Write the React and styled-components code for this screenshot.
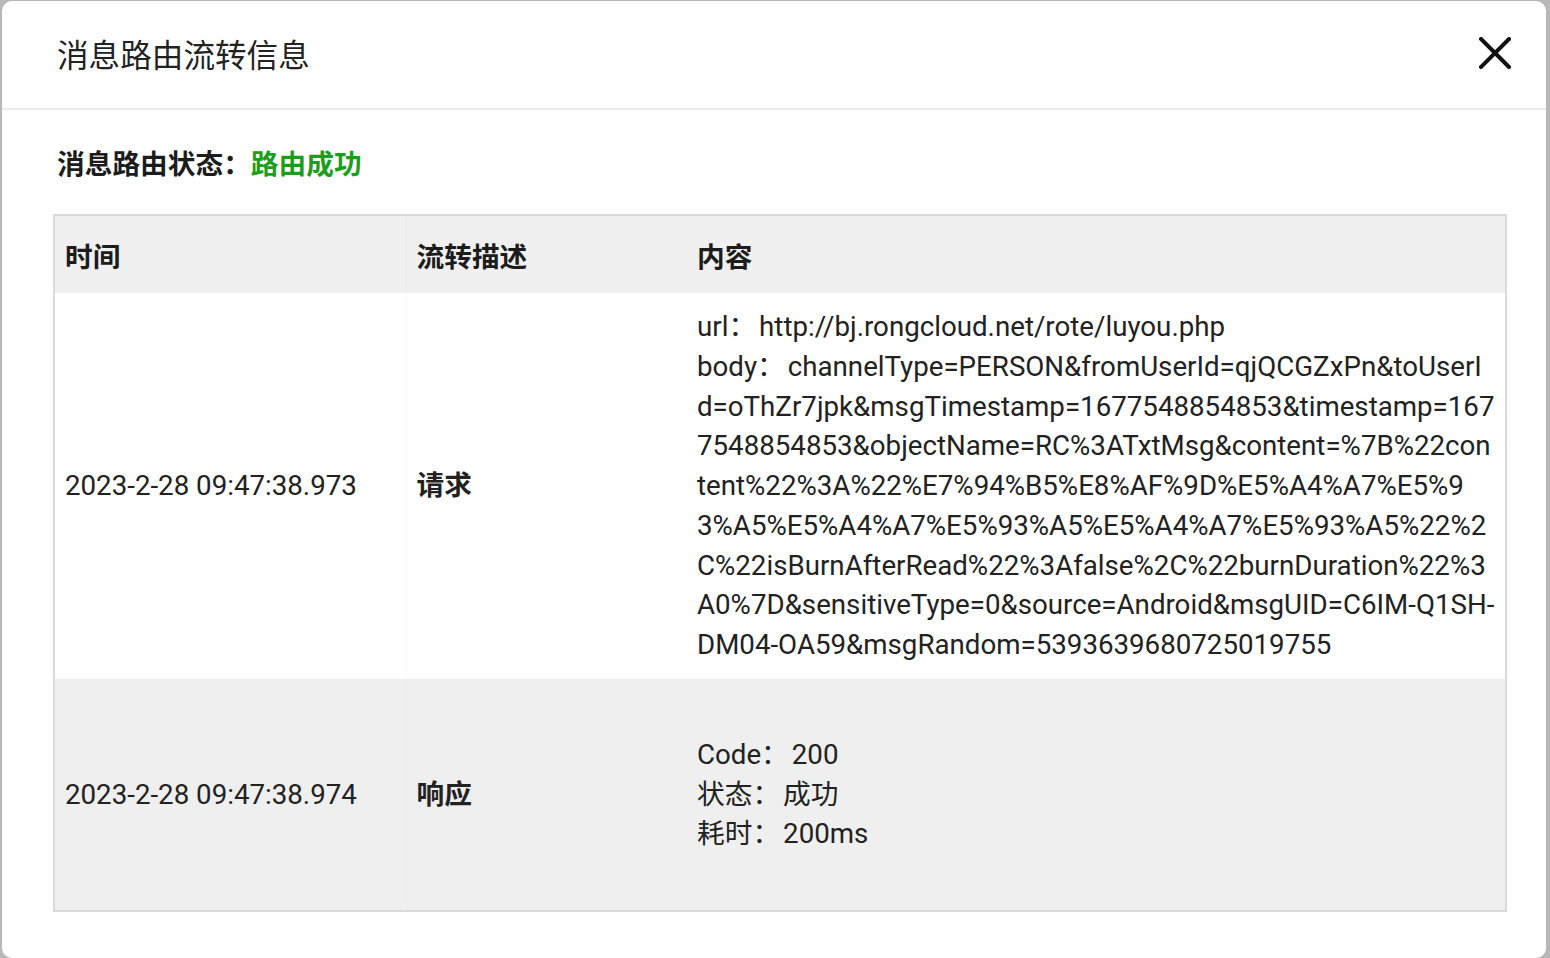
import React from 'react'
import styled, { createGlobalStyle } from 'styled-components'

const GlobalStyle = createGlobalStyle`
    html, body {
        margin: 0;
        padding: 0;
        background: #b8b8b8;
        font-family: Roboto, "Noto Sans CJK SC", sans-serif;
        color: #222;
    }
`

const Modal = styled.div`
    margin: 1px 4px 0 2px;
    height: 957px;
    background: #fff;
    border-radius: 10px;
    overflow: hidden;
    display: flex;
    flex-direction: column;
`

const Header = styled.div`
    border-bottom: 2px solid #ebebeb;
    display: flex;
    align-items: center;
    justify-content: space-between;
    padding: 0 35px 3px 55px;
    box-sizing: border-box;
    height: 109px;
    flex-shrink: 0;
`

const Title = styled.h2`
    margin: 0;
    font-size: 31.6px;
    font-weight: 400;
    color: #222;
`

const CloseButton = styled.button`
    border: none;
    background: none;
    padding: 0;
    width: 32px;
    height: 32px;
    display: flex;
    cursor: pointer;
`

const Body = styled.div`
    padding: 35px 39px 0 51px;
`

const Status = styled.div`
    font-size: 27.7px;
    font-weight: 700;
    line-height: 40px;
    padding-left: 4px;
    margin-bottom: 29px;
    color: #1c1c1c;
`

const StatusValue = styled.span`
    color: #1a9f1a;
`

const Table = styled.table`
    width: 100%;
    border-collapse: collapse;
    border: 2px solid #dadada;
    table-layout: fixed;
    font-size: 27.7px;
`

const HeadCell = styled.th`
    height: 77px;
    padding: 0 10px;
    text-align: left;
    font-weight: 700;
    background: #f0f0f0;
    color: #1c1c1c;
    &:first-child { border-right: 1px solid #ebebeb; }
`

const Row = styled.tr`
    background: ${p => (p.$shaded ? '#efefef' : '#fff')};
`

const Cell = styled.td`
    padding: ${p => p.$pad}px 10px;
    vertical-align: middle;
    line-height: 39.75px;
    font-weight: ${p => (p.$bold ? 700 : 400)};
    word-break: break-all;
    &:first-child { border-right: 1px solid ${p => (p.$shaded ? '#ebebeb' : '#fafafa')}; }
    &:last-child { padding-right: 8px; }
`

const Line = styled.div`
    color: #222;
`

const Label = styled.span`
    margin-right: 3px;
`

const requestBody = 'channelType=PERSON&fromUserId=qjQCGZxPn&toUserId=oThZr7jpk&msgTimestamp=1677548854853&timestamp=1677548854853&objectName=RC%3ATxtMsg&content=%7B%22content%22%3A%22%E7%94%B5%E8%AF%9D%E5%A4%A7%E5%93%A5%E5%A4%A7%E5%93%A5%E5%A4%A7%E5%93%A5%22%2C%22isBurnAfterRead%22%3Afalse%2C%22burnDuration%22%3A0%7D&sensitiveType=0&source=Android&msgUID=C6IM-Q1SH-DM04-OA59&msgRandom=5393639680725019755'

const rows = [
    {
        time: '2023-2-28 09:47:38.973',
        desc: '请求',
        pad: 14,
        lines: [['url：', 'http://bj.rongcloud.net/rote/luyou.php'], ['body：', requestBody]],
    },
    {
        time: '2023-2-28 09:47:38.974',
        desc: '响应',
        pad: 56,
        shaded: true,
        lines: [['Code：', '200'], ['状态：', '成功'], ['耗时：', '200ms']],
    },
]

const App = () => {
    return (
        <>
            <GlobalStyle />
            <Modal>
                <Header>
                    <Title>消息路由流转信息</Title>
                    <CloseButton aria-label="close">
                        <svg width="32" height="32" viewBox="0 0 32 32">
                            <path d="M2 2 L30 30 M30 2 L2 30" stroke="#111" strokeWidth="4" strokeLinecap="square" />
                        </svg>
                    </CloseButton>
                </Header>
                <Body>
                    <Status>
                        消息路由状态：<StatusValue>路由成功</StatusValue>
                    </Status>
                    <Table>
                        <colgroup>
                            <col style={{ width: 352 }} />
                            <col style={{ width: 281 }} />
                            <col />
                        </colgroup>
                        <thead>
                            <tr>
                                <HeadCell>时间</HeadCell>
                                <HeadCell>流转描述</HeadCell>
                                <HeadCell>内容</HeadCell>
                            </tr>
                        </thead>
                        <tbody>
                            {rows.map(r => (
                                <Row key={r.time} $shaded={r.shaded}>
                                    <Cell $pad={r.pad} $shaded={r.shaded}>{r.time}</Cell>
                                    <Cell $pad={r.pad} $shaded={r.shaded} $bold>{r.desc}</Cell>
                                    <Cell $pad={r.pad} $shaded={r.shaded}>
                                        {r.lines.map(([label, value]) => (
                                            <Line key={label}>
                                                <Label>{label}</Label>{value}
                                            </Line>
                                        ))}
                                    </Cell>
                                </Row>
                            ))}
                        </tbody>
                    </Table>
                </Body>
            </Modal>
        </>
    )
}

export default App
